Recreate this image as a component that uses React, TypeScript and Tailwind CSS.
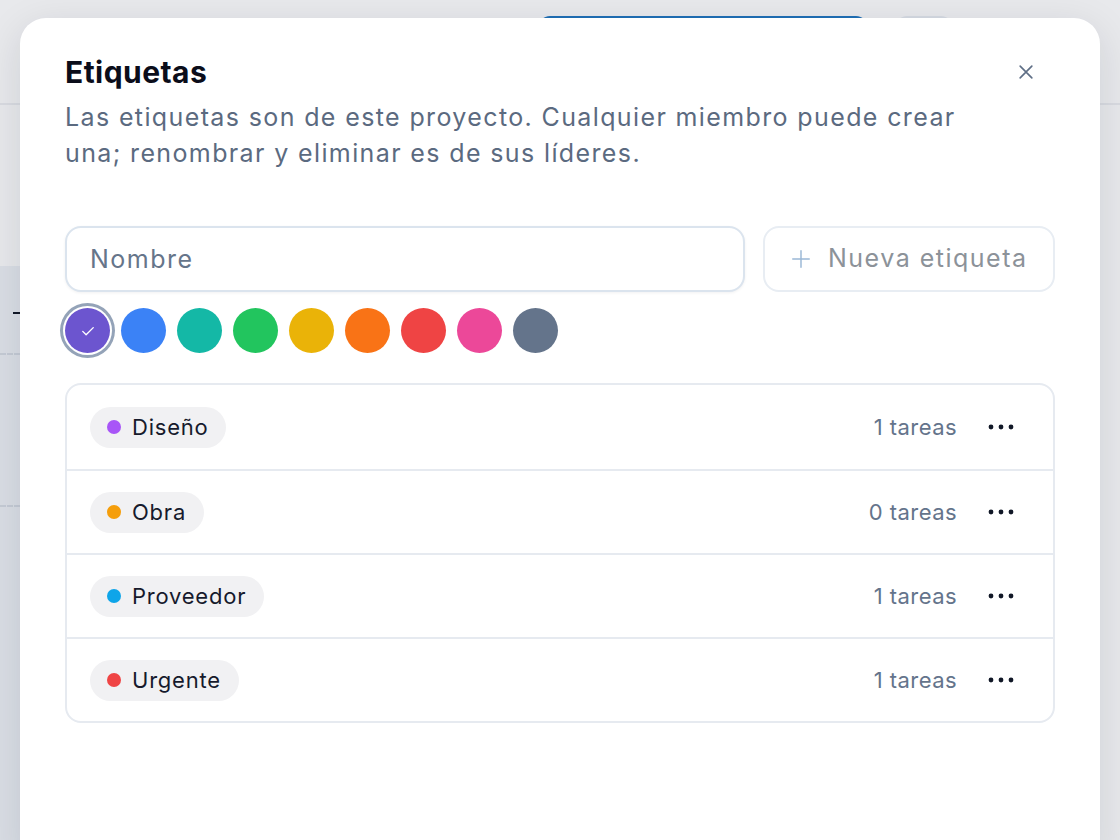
import React, { useState } from 'react';

type Label = { name: string; dot: string; count: number };

const SWATCHES = ['#6c55cf', '#3b82f6', '#14b8a6', '#22c55e', '#eab308', '#f97316', '#ef4444', '#ec4899', '#64748b'];

const LABELS: Label[] = [
  { name: 'Diseño', dot: '#a855f7', count: 1 },
  { name: 'Obra', dot: '#f59e0b', count: 0 },
  { name: 'Proveedor', dot: '#0ea5e9', count: 1 },
  { name: 'Urgente', dot: '#ef4444', count: 1 },
];

const Backdrop: React.FC = () => (
  <div className="absolute inset-0">
    <div className="absolute left-[538px] top-[16px] h-[40px] w-[330px] rounded-xl bg-[#1f6fb5]" />
    <div className="absolute left-[895px] top-[16px] h-[40px] w-[58px] rounded-xl bg-[#d5dae2]" />
    <div className="absolute left-0 right-0 top-[103px] h-[2px] bg-[#d9dbe1]" />
    <div className="absolute bottom-0 left-0 top-[266px] w-[40px] bg-[#dadee5]">
      <div className="absolute left-[13px] top-[46px] h-[2px] w-[8px] bg-[#111827]" />
      <div className="absolute left-0 top-[87px] w-[20px] border-t-2 border-dashed border-[#c5cbd5]" />
      <div className="absolute left-0 top-[239px] w-[20px] border-t-2 border-dashed border-[#c5cbd5]" />
    </div>
  </div>
);

const App: React.FC = () => {
  const [selected, setSelected] = useState(0);
  const [name, setName] = useState('');

  return (
    <div
      className="relative h-[840px] w-[1120px] overflow-hidden bg-[#e8e9ec]"
      style={{ fontFamily: 'Inter, "Noto Sans", sans-serif' }}
    >
      <Backdrop />

      <div className="relative mx-[20px] mt-[18px] h-[840px] rounded-t-[26px] bg-white px-[45px] pt-[36px] shadow-[0_10px_40px_rgba(15,23,42,0.12)]">
        <div className="flex items-start justify-between">
          <div>
            <h2 className="text-[30px] font-bold leading-[36px] tracking-[0.015em] text-[#0b0d1a]">Etiquetas</h2>
            <p className="mt-[9px] max-w-[920px] text-[25px] leading-[36px] tracking-[0.055em] text-[#5b6a80]">
              Las etiquetas son de este proyecto. Cualquier miembro puede crear una; renombrar y eliminar es de sus líderes.
            </p>
          </div>
          <button className="mr-[11px] flex h-[36px] w-[36px] items-center justify-center text-[#5f6f86]">
            <svg width="20" height="20" viewBox="0 0 24 24" fill="none" stroke="currentColor" strokeWidth="2" strokeLinecap="round">
              <path d="M5 5l14 14M19 5L5 19" />
            </svg>
          </button>
        </div>

        <div className="mt-[55px] flex gap-[18px]">
          <input
            value={name}
            onChange={(e) => setName(e.target.value)}
            placeholder="Nombre"
            className="h-[66px] flex-1 rounded-[16px] border-2 border-[#dbe4ee] bg-white px-[23px] text-[25px] tracking-[0.06em] text-[#1f2937] shadow-[0_1px_3px_rgba(15,23,42,0.06)] outline-none placeholder:text-[#66758a]"
          />
          <button className="flex h-[66px] w-[292px] items-center gap-[16px] rounded-[16px] border-2 border-[#e8edf3] pl-[25px] text-[25px] tracking-[0.06em] text-[#8c9299]">
            <svg width="22" height="22" viewBox="0 0 24 24" fill="none" stroke="#9bb8d6" strokeWidth="1.6" strokeLinecap="round">
              <path d="M12 3v18M3 12h18" />
            </svg>
            Nueva etiqueta
          </button>
        </div>

        <div className="mt-[16px] flex gap-[11px]">
          {SWATCHES.map((c, i) => (
            <button
              key={c}
              onClick={() => setSelected(i)}
              className={`flex h-[45px] w-[45px] items-center justify-center rounded-full ${
                i === selected ? 'shadow-[0_0_0_2px_#ffffff,0_0_0_5px_#94a3b8]' : ''
              }`}
              style={{ backgroundColor: c }}
            >
              {i === selected && (
                <svg width="18" height="18" viewBox="0 0 24 24" fill="none" stroke="#ffffff" strokeWidth="1.8" strokeLinecap="round" strokeLinejoin="round">
                  <path d="M5 12.5l4.5 4.5L19 7.5" />
                </svg>
              )}
            </button>
          ))}
        </div>

        <div className="mt-[30px] overflow-hidden rounded-[16px] border-2 border-[#e6eaf0]">
          {LABELS.map((l, i) => (
            <div
              key={l.name}
              className={`flex h-[84px] items-center justify-between pl-[23px] pr-[32px] ${i > 0 ? 'border-t-2 border-[#e6eaf0]' : ''}`}
            >
              <span className="flex h-[41px] items-center gap-[11px] rounded-full bg-[#f1f1f3] pl-[17px] pr-[18px] text-[22px] tracking-[0.035em] text-[#161a2c]">
                <span className="h-[14px] w-[14px] rounded-full" style={{ backgroundColor: l.dot }} />
                {l.name}
              </span>
              <div className="flex items-center gap-[24px]">
                <span className="text-[22px] tracking-[0.02em] text-[#64748b]">{l.count} tareas</span>
                <button className="flex h-[40px] w-[40px] items-center justify-center text-[#111827]">
                  <svg width="26" height="6" viewBox="0 0 26 6" fill="currentColor">
                    <circle cx="3" cy="3" r="2.4" />
                    <circle cx="13" cy="3" r="2.4" />
                    <circle cx="23" cy="3" r="2.4" />
                  </svg>
                </button>
              </div>
            </div>
          ))}
        </div>
      </div>
    </div>
  );
};

export default App;
